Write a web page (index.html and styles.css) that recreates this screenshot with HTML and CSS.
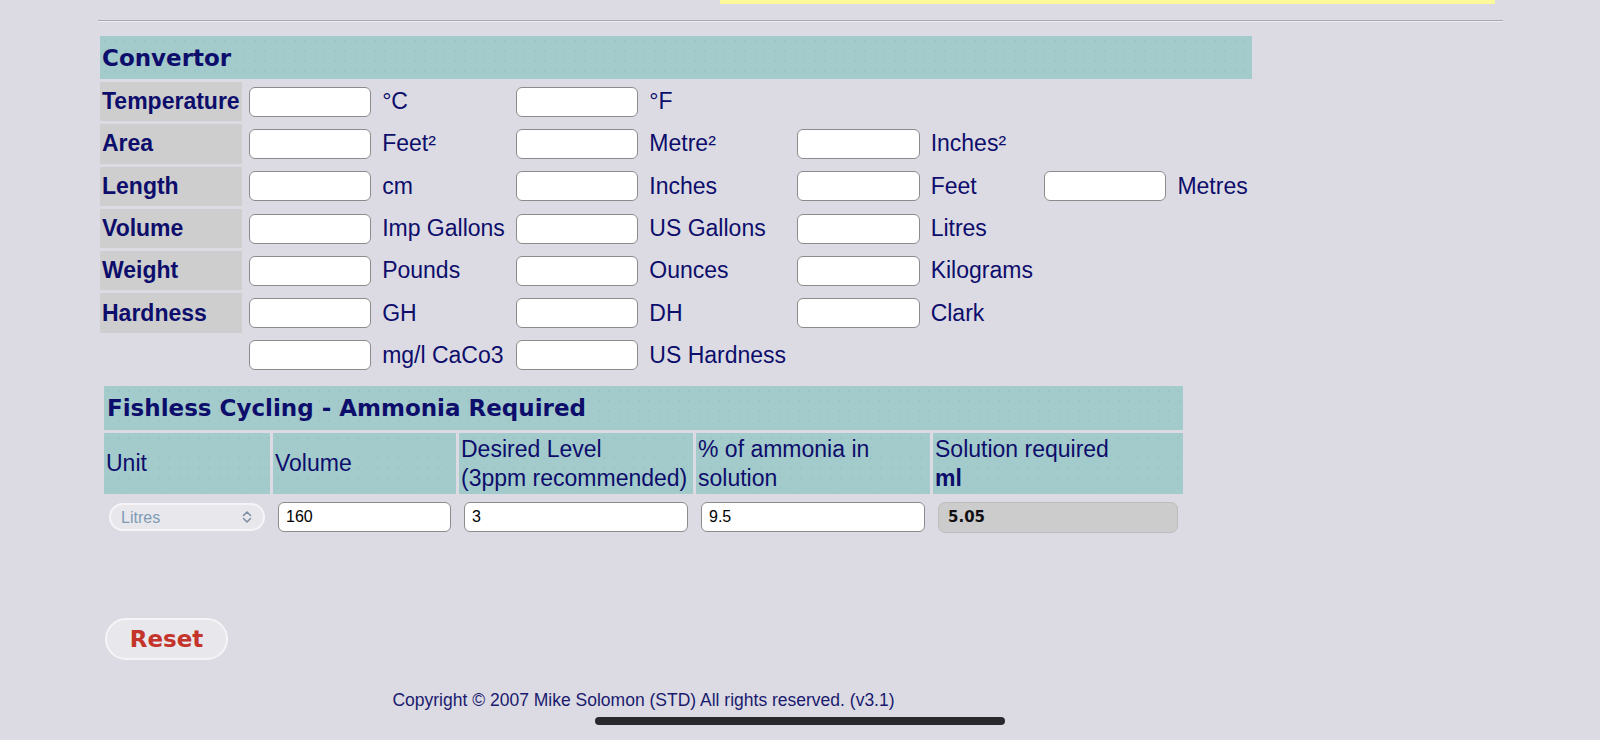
FILE: index.html
```html
<!DOCTYPE html>
<html lang="en">
<head>
    <meta charset="UTF-8">
    <title>Aquarium Calculator</title>
    <link rel="stylesheet" href="styles.css">
</head>
<body>
    <div class="topbar">
        <div class="notice"></div>
    </div>
    <hr class="rule">

    <div class="page">
        <table class="convertor">
            <tr>
                <th class="title" colspan="9">Convertor</th>
            </tr>
            <tr>
                <td class="label">Temperature</td>
                <td><input class="field" type="text"></td>
                <td>°C</td>
                <td><input class="field" type="text"></td>
                <td>°F</td>
                <td></td><td></td><td></td><td></td>
            </tr>
            <tr>
                <td class="label">Area</td>
                <td><input class="field" type="text"></td>
                <td>Feet²</td>
                <td><input class="field" type="text"></td>
                <td>Metre²</td>
                <td><input class="field" type="text"></td>
                <td>Inches²</td>
                <td></td><td></td>
            </tr>
            <tr>
                <td class="label">Length</td>
                <td><input class="field" type="text"></td>
                <td>cm</td>
                <td><input class="field" type="text"></td>
                <td>Inches</td>
                <td><input class="field" type="text"></td>
                <td>Feet</td>
                <td><input class="field" type="text"></td>
                <td>Metres</td>
            </tr>
            <tr>
                <td class="label">Volume</td>
                <td><input class="field" type="text"></td>
                <td>Imp Gallons</td>
                <td><input class="field" type="text"></td>
                <td>US Gallons</td>
                <td><input class="field" type="text"></td>
                <td>Litres</td>
                <td></td><td></td>
            </tr>
            <tr>
                <td class="label">Weight</td>
                <td><input class="field" type="text"></td>
                <td>Pounds</td>
                <td><input class="field" type="text"></td>
                <td>Ounces</td>
                <td><input class="field" type="text"></td>
                <td>Kilograms</td>
                <td></td><td></td>
            </tr>
            <tr>
                <td class="label">Hardness</td>
                <td><input class="field" type="text"></td>
                <td>GH</td>
                <td><input class="field" type="text"></td>
                <td>DH</td>
                <td><input class="field" type="text"></td>
                <td>Clark</td>
                <td></td><td></td>
            </tr>
            <tr>
                <td></td>
                <td><input class="field" type="text"></td>
                <td>mg/l CaCo3</td>
                <td><input class="field" type="text"></td>
                <td>US Hardness</td>
                <td></td><td></td><td></td><td></td>
            </tr>
        </table>

        <table class="fishless">
            <colgroup>
                <col class="col-unit">
                <col class="col-volume">
                <col class="col-level">
                <col class="col-percent">
                <col class="col-result">
            </colgroup>
            <tr>
                <th class="title" colspan="5">Fishless Cycling - Ammonia Required</th>
            </tr>
            <tr class="heads">
                <td>Unit</td>
                <td>Volume</td>
                <td>Desired Level<br>(3ppm recommended)</td>
                <td>% of ammonia in<br>solution</td>
                <td>Solution required<br><b>ml</b></td>
            </tr>
            <tr class="inputs">
                <td>
                    <span class="select-wrap">
                        <select class="unit-select">
                            <option>Litres</option>
                            <option>Imp Gallons</option>
                            <option>US Gallons</option>
                        </select>
                        <svg class="chevrons" width="10" height="14" viewBox="0 0 10 14">
                            <path d="M1.5 5.5 L5 2 L8.5 5.5 M1.5 8.5 L5 12 L8.5 8.5" fill="none" stroke="#7f8fa3" stroke-width="1.6" stroke-linecap="round" stroke-linejoin="round"/>
                        </svg>
                    </span>
                </td>
                <td><input class="cell-input" type="text" value="160"></td>
                <td><input class="cell-input" type="text" value="3"></td>
                <td><input class="cell-input" type="text" value="9.5"></td>
                <td><input class="cell-input result" type="text" value="5.05" readonly></td>
            </tr>
        </table>

        <div class="actions">
            <button class="reset" type="button">Reset</button>
        </div>

        <p class="copyright">Copyright © 2007 Mike Solomon (STD) All rights reserved. (v3.1)</p>
    </div>

    <div class="home-indicator"></div>
</body>
</html>
```

FILE: styles.css
```css
body {
    margin: 0;
    background: #dcdbe3;
    font-family: "Liberation Sans", Arial, sans-serif;
    color: #0d0d6b;
    overflow: hidden;
}

.topbar {
    display: flex;
    justify-content: flex-end;
    padding-right: 105px;
}

.notice {
    width: 775px;
    height: 4px;
    background: #fbf99b;
}

.rule {
    width: 1405px;
    height: 0;
    margin: 16px auto 0;
    border: 0;
    border-top: 1px solid #a9a9ae;
    border-bottom: 1px solid #ececf1;
}

.page {
    width: 1085px;
    padding-left: 97px;
    margin-top: 11px;
}

/* convertor */

.convertor {
    width: max-content;
    border-spacing: 3px;
}

.title {
    background-color: #a3cbcb;
    background-image: radial-gradient(rgba(90, 130, 130, 0.18) 0.6px, transparent 0.8px);
    background-size: 10px 10px;
    font-family: "DejaVu Sans", Verdana, sans-serif;
    font-size: 23px;
    font-weight: bold;
    text-align: left;
    padding: 0 2px;
}

.convertor .title {
    height: 43px;
}

.convertor td {
    height: 39.3px;
    padding: 0 4px;
    font-size: 23px;
    white-space: nowrap;
    vertical-align: middle;
}

.convertor td.label {
    background: #cecece;
    font-weight: bold;
    padding: 0 2px;
}

.field {
    display: block;
    width: 122.5px;
    height: 30px;
    box-sizing: border-box;
    border: 1.5px solid #8c8c8c;
    border-radius: 6px;
    background: #fff;
}

/* fishless cycling */

.fishless {
    width: 1085px;
    table-layout: fixed;
    border-spacing: 3px;
    margin: 5px 0 0 4px;
}

.col-unit { width: 166px; }
.col-volume { width: 183px; }
.col-level { width: 234px; }
.col-percent { width: 234px; }
.col-result { width: 250px; }

.fishless .title {
    height: 44px;
    padding: 0 3px;
}

.heads td {
    height: 61px;
    padding: 0 2px;
    background-color: #a3cbcb;
    background-image: radial-gradient(rgba(90, 130, 130, 0.18) 0.6px, transparent 0.8px);
    background-size: 10px 10px;
    font-size: 23px;
    line-height: 28.5px;
    white-space: nowrap;
    vertical-align: middle;
}

.inputs td {
    height: 40px;
    padding: 0 5px;
    vertical-align: middle;
}

.select-wrap {
    position: relative;
    display: block;
}

.unit-select {
    display: block;
    width: 100%;
    height: 28px;
    padding: 0 10px;
    appearance: none;
    -webkit-appearance: none;
    border: 2px solid #f5f5f7;
    border-radius: 14px;
    background: #e8e8ec;
    color: #7e9bb5;
    font-family: "Liberation Sans", Arial, sans-serif;
    font-size: 16px;
    outline: none;
}

.chevrons {
    position: absolute;
    right: 13px;
    top: 7px;
    pointer-events: none;
}

.cell-input {
    display: block;
    width: 100%;
    height: 30px;
    box-sizing: border-box;
    padding: 0 7px;
    border: 1.5px solid #8c8c8c;
    border-radius: 6px;
    background: #fff;
    color: #000;
    font-family: "Liberation Sans", Arial, sans-serif;
    font-size: 16px;
    outline: none;
}

.cell-input.result {
    height: 31px;
    padding: 0 9px;
    border: 1px solid #bdbdbd;
    border-radius: 7px;
    background: #cccccc;
    color: #111;
    font-family: "DejaVu Sans", Verdana, sans-serif;
    font-size: 15px;
    font-weight: bold;
}

/* bottom */

.actions {
    margin: 78px 0 0 8px;
}

.reset {
    width: 123px;
    height: 42px;
    border: 2px solid #f5f5f7;
    border-radius: 21px;
    background: #e8e8ec;
    color: #c4342a;
    font-family: "DejaVu Sans", Verdana, sans-serif;
    font-size: 23px;
    font-weight: bold;
    cursor: pointer;
}

.copyright {
    margin: 30px 0 0 8px;
    font-size: 17.5px;
    line-height: 20px;
    text-align: center;
    color: #1a1a6e;
}

.home-indicator {
    position: fixed;
    left: 595px;
    bottom: 15px;
    width: 410px;
    height: 8px;
    border-radius: 4px;
    background: #29292d;
}
```
